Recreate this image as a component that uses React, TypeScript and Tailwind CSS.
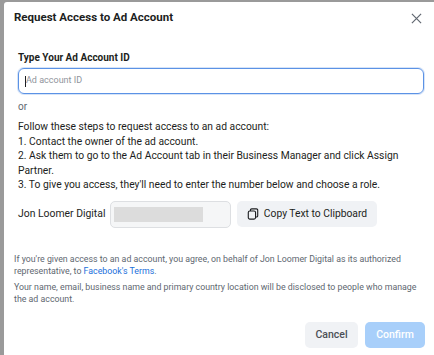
import React from 'react';

const App: React.FC = () => {
  return (
    <div className="w-[434px] h-[355px] bg-[#9a9a9a] pl-[4px] pt-[2px] overflow-hidden" style={{ fontFamily: 'Roboto, "Liberation Sans", sans-serif' }}>
      <div className="h-full bg-white rounded-tl-[3px] pl-[10px] pr-[9px] flex flex-col">
        <div className="flex items-center justify-between h-[32px] shrink-0">
          <h2 className="text-[11.5px] font-bold text-[#1c1e21]">Request Access to Ad Account</h2>
          <svg width="11" height="11" viewBox="0 0 12 12" className="mr-[3px]">
            <path d="M1 1 L11 11 M11 1 L1 11" stroke="#606770" strokeWidth="1.3" />
          </svg>
        </div>

        <div className="pl-[4px] pr-[1px] mt-[16px]">
          <label className="block text-[10px] font-bold text-[#1c1e21] leading-[16px]">Type Your Ad Account ID</label>
          <div className="mt-[2px] h-[26px] border border-[#5b92e5] rounded-[6px] flex items-center px-[6px] shadow-[0_0_0_1px_rgba(91,146,229,0.25)]">
            <span className="w-px h-[11px] bg-[#1c1e21]"></span>
            <span className="text-[9px] text-[#90949c]">Ad account ID</span>
          </div>

          <p className="mt-[6px] text-[10px] text-[#606770] leading-[14px]">or</p>

          <div className="mt-[6px] text-[10.3px] text-[#1c1e21] leading-[14.5px]">
            <p>Follow these steps to request access to an ad account:</p>
            <p>1. Contact the owner of the ad account.</p>
            <p>2. Ask them to go to the Ad Account tab in their Business Manager and click Assign Partner.</p>
            <p>3. To give you access, they'll need to enter the number below and choose a role.</p>
          </div>

          <div className="mt-[8px] flex items-center">
            <span className="text-[10.4px] text-[#1c1e21] w-[92px] whitespace-nowrap">Jon Loomer Digital</span>
            <div className="w-[121px] h-[27px] border border-[#dddfe2] rounded-[5px] bg-[#f5f6f7] flex items-center px-[3px]">
              <div className="w-[89px] h-[15px] bg-[#dcdcdc]"></div>
            </div>
            <button className="ml-[6px] h-[26px] w-[140px] rounded-[5px] bg-[#f0f2f5] flex items-center justify-center gap-[5px] text-[10.3px] text-[#1c1e21]">
              <svg width="12" height="12" viewBox="0 0 14 14" fill="none" stroke="#1c1e21" strokeWidth="1.3">
                <path d="M4 3.5 V2.5 a1.5 1.5 0 0 1 1.5-1.5 H11 a1.5 1.5 0 0 1 1.5 1.5 V9 a1.5 1.5 0 0 1-1.5 1.5 H10.5" />
                <rect x="1.5" y="3.5" width="8.5" height="9.5" rx="1.8" />
              </svg>
              Copy Text to Clipboard
            </button>
          </div>
        </div>

        <div className="mt-[25px] text-[8.8px] text-[#606770] leading-[12px]">
          <p>If you're given access to an ad account, you agree, on behalf of Jon Loomer Digital as its authorized representative, to <span className="text-[#216fdb]">Facebook's Terms</span>.</p>
          <p className="mt-[4px]">Your name, email, business name and primary country location will be disclosed to people who manage the ad account.</p>
        </div>

        <div className="mt-[17px] flex justify-end gap-[7px]">
          <button className="h-[26px] w-[53px] rounded-[5px] bg-[#f0f2f5] text-[10.5px] font-medium text-[#4b4f56]">Cancel</button>
          <button className="h-[26px] w-[60px] rounded-[5px] bg-[#a8cffa] text-[10.5px] font-medium text-white">Confirm</button>
        </div>
      </div>
    </div>
  );
};

export default App;
